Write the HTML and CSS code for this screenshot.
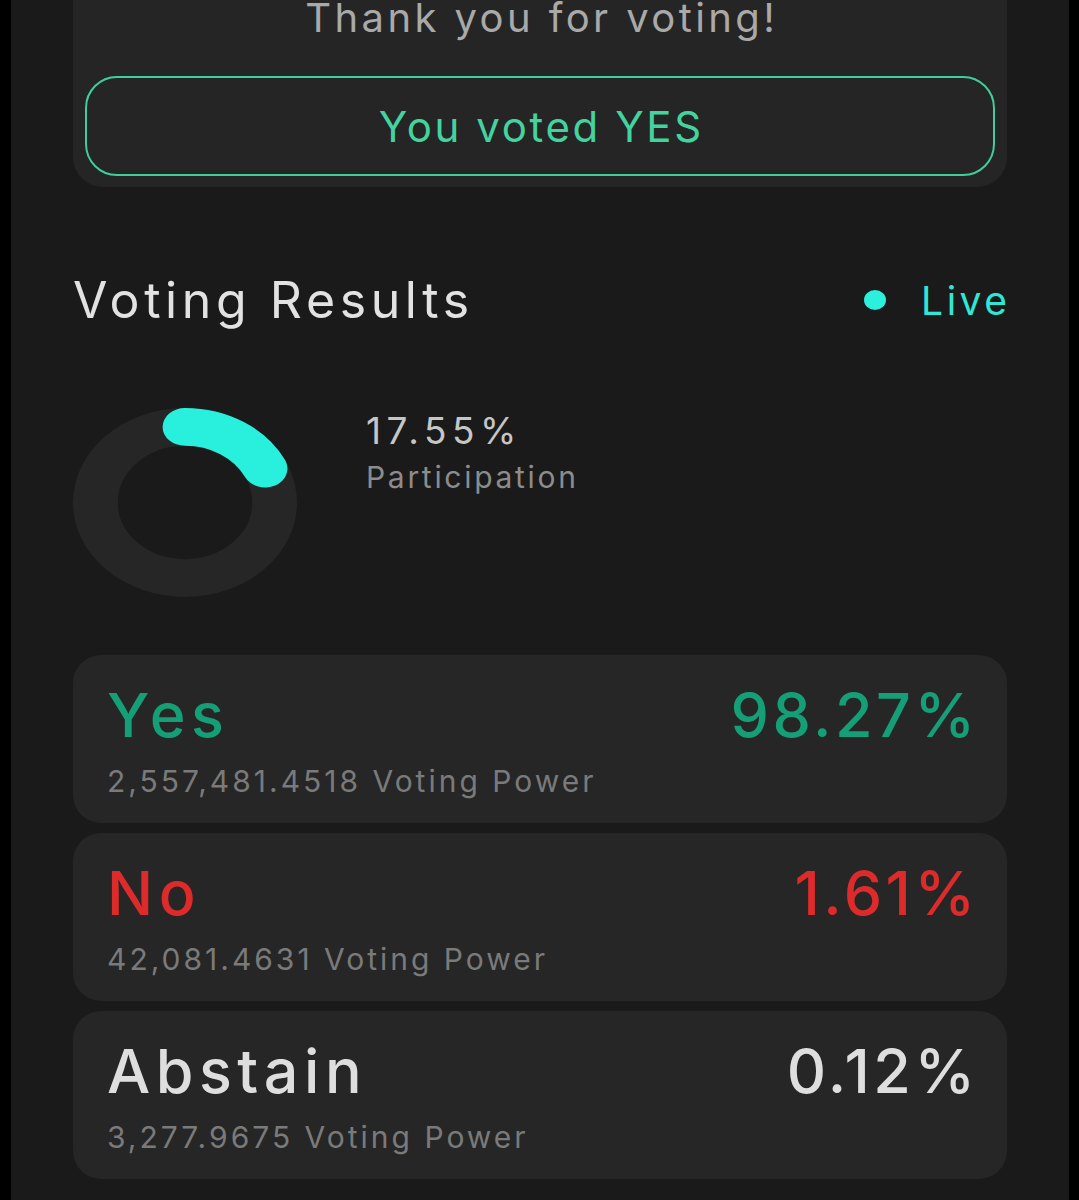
FILE: index.html
```html
<!DOCTYPE html>
<html lang="en">
<head>
<meta charset="utf-8">
<title>Voting Results</title>
<link rel="stylesheet" href="styles.css">
</head>
<body>
<div class="screen">
  <section class="vote-card">
    <h2 class="thanks">Thank you for voting!</h2>
    <div class="voted-btn"><span class="voted-text">You voted YES</span></div>
  </section>

  <header class="results-head">
    <h1 class="results-title">Voting Results</h1>
    <div class="live"><span class="live-dot"></span><span class="live-text">Live</span></div>
  </header>

  <section class="participation">
    <svg class="donut" viewBox="0 0 200 200" preserveAspectRatio="none" width="224" height="189">
      <circle cx="100" cy="100" r="80" fill="none" stroke="#262626" stroke-width="40"/>
      <circle cx="100" cy="100" r="80" fill="none" stroke="#28f0dc" stroke-width="40" stroke-linecap="round" stroke-dasharray="88.2 502.65" transform="rotate(-90 100 100)"/>
    </svg>
    <div class="part-text">
      <div class="part-value">17.55%</div>
      <div class="part-label">Participation</div>
    </div>
  </section>

  <section class="options">
    <div class="option">
      <div class="opt-row"><span class="opt-name yes">Yes</span><span class="opt-pct yes">98.27%</span></div>
      <div class="opt-power">2,557,481.4518 Voting Power</div>
    </div>
    <div class="option">
      <div class="opt-row"><span class="opt-name no">No</span><span class="opt-pct no">1.61%</span></div>
      <div class="opt-power">42,081.4631 Voting Power</div>
    </div>
    <div class="option">
      <div class="opt-row"><span class="opt-name abstain">Abstain</span><span class="opt-pct abstain">0.12%</span></div>
      <div class="opt-power">3,277.9675 Voting Power</div>
    </div>
  </section>
</div>
</body>
</html>
```

FILE: styles.css
```css
* { box-sizing: border-box; }
html, body { margin: 0; padding: 0; background: #000; }
body { font-family: "Inter", "Liberation Sans", sans-serif; overflow: hidden; }

.screen {
  margin: 0 10px 0 11px;
  height: 1200px;
  background: #1a1a1a;
  padding: 0 62px;
  overflow: hidden;
}

.vote-card {
  margin-top: -54px;
  padding: 40px 12px 11px;
  background: #252525;
  border-radius: 0 0 30px 30px;
}
.thanks {
  margin: 0;
  height: 64px;
  line-height: 64px;
  text-align: center;
  font-size: 40px;
  font-weight: 400;
  color: #a9a9a9;
  letter-spacing: 3.4px;
  text-indent: 3.4px;
}
.voted-btn {
  margin-top: 26px;
  height: 100px;
  border: 2px solid #3fcf9b;
  border-radius: 32px;
  display: flex;
  align-items: center;
  justify-content: center;
}
.voted-text {
  font-size: 42px;
  color: #43d39f;
  letter-spacing: 2.6px;
  margin-right: -2.6px;
}

.results-head {
  margin-top: 83px;
  height: 60px;
  display: flex;
  align-items: center;
  justify-content: space-between;
}
.results-title {
  margin: 0;
  font-size: 50px;
  font-weight: 400;
  color: #e2e2e2;
  letter-spacing: 4.6px;
}
.live { display: flex; align-items: center; gap: 35px; }
.live-dot {
  width: 22px; height: 20px; border-radius: 50%;
  background: #2af0dc;
}
.live-text { font-size: 39px; color: #2ee8d5; letter-spacing: 3.5px; margin-right: -3.5px; }

.participation {
  margin-top: 78px;
  display: flex;
  align-items: flex-start;
  gap: 69px;
}
.donut { display: block; flex: none; }
.part-value { font-size: 37px; line-height: 46px; color: #c6c6c6; letter-spacing: 5.5px; }
.part-label { font-size: 30px; line-height: 46px; color: #8c8c8c; letter-spacing: 2.7px; }

.options {
  margin-top: 58px;
  display: flex;
  flex-direction: column;
  gap: 10px;
}
.option {
  height: 168px;
  background: #262626;
  border-radius: 28px;
  padding: 28px 32px 0 34px;
}
.opt-row {
  height: 64px;
  display: flex;
  align-items: center;
  justify-content: space-between;
  font-size: 61px;
  font-weight: 500;
}
.opt-name { letter-spacing: 5.5px; }
.opt-pct { letter-spacing: 3.5px; margin-right: -3.5px; }
.opt-power {
  margin-top: 14px;
  height: 40px;
  line-height: 40px;
  font-size: 30px;
  color: #7a7a7a;
  letter-spacing: 3px;
}
.yes { color: #159f76; }
.no { color: #dd2b2b; }
.abstain { color: #dedede; }
```
